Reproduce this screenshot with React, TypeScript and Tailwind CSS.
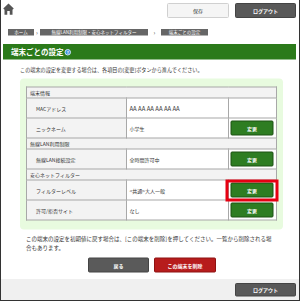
import React from "react";

function GreenBtn() {
  return (
    <div className="w-[86px] h-[30px] bg-[#2e7d22] border-2 border-[#1c5212] rounded-[3px] flex items-center justify-center text-white text-[10px] font-bold">
      変更
    </div>
  );
}

function HeadRow({ label }: { label: string }) {
  return (
    <tr className="h-[22px]">
      <td colSpan={3} className="border-2 border-[#a8a8a8] bg-[#f3f3f3] pl-[6px] text-[10px] text-[#333] align-middle leading-none">
        {label}
      </td>
    </tr>
  );
}

function DataRow({ label, value, btn, hl, latin }: { label: string; value: string; btn?: boolean; hl?: boolean; latin?: boolean }) {
  return (
    <tr className="h-[40px]">
      <td className="border-2 border-[#a8a8a8] bg-[#f3f3f3] pl-[18px] text-[10px] text-[#333] w-[200px] align-middle">{label}</td>
      <td className={latin ? "border-2 border-[#a8a8a8] bg-white pl-[5px] text-[#333] w-[204px] align-middle text-[12px]" : "border-2 border-[#a8a8a8] bg-white pl-[5px] text-[#333] w-[204px] align-middle text-[10px]"}>{value}</td>
      <td className="border-2 border-[#a8a8a8] bg-white pl-[3px] align-middle">
        {btn && (
          <div className="relative w-[86px]">
            <GreenBtn />
            {hl && <div className="absolute left-[-10px] right-[-10px] top-[-6px] bottom-[-8px] border-[6px] border-[#e60012]" />}
          </div>
        )}
      </td>
    </tr>
  );
}

export default function App() {
  return (
    <div className="w-[300px] h-[301px] overflow-hidden">
      <div className="w-[600px] h-[602px] scale-50 origin-top-left bg-white border-x-2 border-b-2 border-[#333] flex flex-col font-['Noto_Sans_CJK_JP','Liberation_Sans',sans-serif]">
        {/* top bar */}
        <div className="flex items-start pt-[6px] h-[44px]">
          <svg width="22" height="24" viewBox="0 0 22 24" className="ml-[4px]">
            <path d="M11 1 L0.5 11 L2.5 13 L3 13 L3 23.5 L8.5 23.5 L8.5 16 L13.5 16 L13.5 23.5 L19 23.5 L19 13 L19.5 13 L21.5 11 Z" fill="#555" />
          </svg>
          <div className="flex-1" />
          <div className="w-[124px] h-[30px] bg-[#f5f5f5] border-2 border-[#d0d0d0] rounded-[3px] flex items-center justify-center text-[10px] text-[#333]">
            保存
          </div>
          <div className="w-[122px] h-[30px] ml-[12px] mr-[6px] bg-[#595959] border-2 border-[#444] rounded-[3px] flex items-center justify-center text-[10px] font-bold text-white">
            ログアウト
          </div>
        </div>
        {/* breadcrumb */}
        <div className="flex items-center pl-[14px] mt-[14px] text-[9px] leading-none">
          <div className="h-[13px] w-[52px] bg-[#666] text-white flex items-center justify-center">ホーム</div>
          <div className="w-[12px] text-center text-[#555] text-[12px]">›</div>
          <div className="h-[13px] w-[216px] bg-[#666] text-white flex items-center justify-center">無線LAN利用制限・安心ネットフィルター</div>
          <div className="w-[26px] text-center text-[#555] text-[12px]">›</div>
          <div className="h-[13px] w-[94px] bg-[#666] text-white flex items-center justify-center">端末ごとの設定</div>
        </div>
        {/* green header */}
        <div className="ml-[4px] mr-[6px] mt-[17px] h-[31px] bg-[#2b7a1a] flex items-center pl-[16px]">
          <span className="text-white text-[15px] font-bold leading-none">端末ごとの設定</span>
          <span className="ml-[2px] mt-[2px] w-[13px] h-[13px] rounded-full bg-[#3d92db] border-2 border-[#cfe3f5] text-white text-[8px] font-bold flex items-center justify-center leading-none">?</span>
        </div>
        {/* description */}
        <div className="pl-[38px] mt-[12px] text-[10.25px] text-[#333] leading-[16px]">
          この端末の設定を変更する場合は、各項目の[変更]ボタンから進んでください。
        </div>
        {/* panel */}
        <div className="ml-[38px] mr-[32px] mt-[10px] bg-[#e8fbdf] rounded-[8px] px-[12px] pt-[16px] pb-[18px]">
          <table className="w-full border-collapse border-2 border-[#999]">
            <tbody>
              <HeadRow label="端末情報" />
              <DataRow label="MACアドレス" value="AA AA AA AA AA AA" latin />
              <DataRow label="ニックネーム" value="小学生" btn />
              <HeadRow label="無線LAN利用制限" />
              <DataRow label="無線LAN接続設定" value="全時間許可中" btn />
              <HeadRow label="安心ネットフィルター" />
              <DataRow label="フィルターレベル" value="<共通>大人一般" btn hl />
              <DataRow label="許可/拒否サイト" value="なし" btn />
            </tbody>
          </table>
        </div>
        {/* bottom text */}
        <div className="ml-[50px] mr-[46px] mt-[8px] text-[11px] text-[#333] leading-[18px]">
          この端末の設定を初期値に戻す場合は、[この端末を削除]を押してください。一覧から削除される場合もあります。
        </div>
        {/* actions */}
        <div className="flex justify-center gap-[10px] mt-[12px] pl-[8px]">
          <div className="w-[122px] h-[30px] bg-[#5a5a5a] border-2 border-[#444] rounded-[3px] flex items-center justify-center text-white text-[10px] font-bold">戻る</div>
          <div className="w-[124px] h-[30px] bg-[#b71c1c] border-2 border-[#8e1212] rounded-[3px] flex items-center justify-center text-white text-[10px] font-bold">この端末を削除</div>
        </div>
        {/* footer */}
        <div className="mt-auto h-[42px] bg-[#f0f0f0] flex items-center justify-end pr-[6px]">
          <div className="w-[122px] h-[27px] bg-[#595959] border-2 border-[#444] rounded-[3px] flex items-center justify-center text-[10px] font-bold text-white">
            ログアウト
          </div>
        </div>
      </div>
    </div>
  );
}
